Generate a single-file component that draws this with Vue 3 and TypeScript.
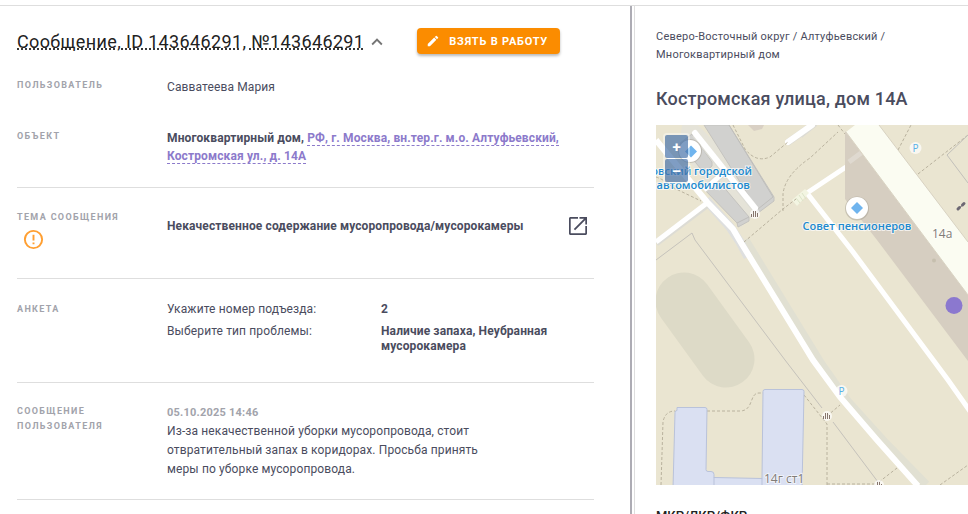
<script setup lang="ts">
import { ref } from 'vue'

interface Answer {
  question: string
  value: string
}

const answers: Answer[] = [
  { question: 'Укажите номер подъезда:', value: '2' },
  { question: 'Выберите тип проблемы:', value: 'Наличие запаха, Неубранная мусорокамера' },
]

const crumbs: string[] = ['Северо-Восточный округ', 'Алтуфьевский', 'Многоквартирный дом']

const gates: [number, number][] = [[755, 214], [827, 416], [879, 485]]

const expanded = ref(true)
const zoom = ref(1)

function changeZoom(step: number): void {
  zoom.value = Math.min(3, Math.max(1, zoom.value + step))
}
</script>

<template>
  <div class="page">
    <main class="message">
      <header class="message-head">
        <h1 class="title"><abbr class="title-text">Сообщение, ID 143646291, №143646291</abbr></h1>
        <button class="toggle" type="button" aria-label="Свернуть" :aria-expanded="expanded" @click="expanded = !expanded">
          <svg viewBox="0 0 24 24" width="22" height="22"><path d="M7.410 15.410L12 10.830l4.590 4.580L18 14l-6-6-6 6z" /></svg>
        </button>
        <button class="take" type="button">
          <svg viewBox="0 0 24 24" width="14" height="14"><path d="M3 17.250V21h3.750L17.810 9.940l-3.750-3.750L3 17.250zM20.710 7.040a1 1 0 0 0 0-1.410l-2.340-2.340a1 1 0 0 0-1.410 0l-1.830 1.830 3.750 3.750 1.830-1.830z" /></svg>
          <span>Взять в работу</span>
        </button>
      </header>

      <div v-if="expanded" class="details">
        <section class="row person">
          <h2 class="label">Пользователь</h2>
          <p>Савватеева Мария</p>
        </section>

        <section class="row ruled object">
          <h2 class="label">Объект</h2>
          <p class="strong">Многоквартирный дом, <a class="link" href="#object">РФ, г. Москва, вн.тер.г. м.о. Алтуфьевский, Костромская ул., д. 14А</a></p>
        </section>

        <section class="row ruled theme">
          <div>
            <h2 class="label">Тема сообщения</h2>
            <svg class="alert" viewBox="0 0 24 24" width="23" height="23"><path d="M11 15h2v2h-2v-2m0-8h2v6h-2V7m1-5C6.470 2 2 6.500 2 12a10 10 0 0 0 10 10 10 10 0 0 0 10-10A10 10 0 0 0 12 2m0 18a8 8 0 0 1-8-8 8 8 0 0 1 8-8 8 8 0 0 1 8 8 8 8 0 0 1-8 8z" /></svg>
          </div>
          <div class="theme-value">
            <p class="strong">Некачественное содержание мусоропровода/мусорокамеры</p>
            <a class="open" href="#theme" aria-label="Открыть тему">
              <svg viewBox="0 0 24 24" width="24" height="24"><path d="M19.300 19.300H4.700V4.700H12V3H4.500C3.670 3 3 3.670 3 4.500v15c0 .83.67 1.500 1.500 1.500h15c.83 0 1.500-.67 1.500-1.500V12h-1.700v7.300zM13.500 3v1.700h4.500L7.800 14.900l1.300 1.300L19.300 6v4.500H21V3h-7.500z" /></svg>
            </a>
          </div>
        </section>

        <section class="row ruled form">
          <h2 class="label">Анкета</h2>
          <dl class="answers">
            <div v-for="answer in answers" :key="answer.question" class="answer">
              <dt>{{ answer.question }}</dt>
              <dd>{{ answer.value }}</dd>
            </div>
          </dl>
        </section>

        <section class="row ruled">
          <h2 class="label">Сообщение пользователя</h2>
          <div>
            <time class="date" datetime="2025-10-05T14:46">05.10.2025 14:46</time>
            <p class="body">Из-за некачественной уборки мусоропровода, стоит отвратительный запах в коридорах. Просьба принять меры по уборке мусоропровода.</p>
          </div>
        </section>
      </div>
    </main>

    <aside class="side">
      <nav class="crumbs">
        <template v-for="(crumb, i) in crumbs" :key="crumb"><template v-if="i"> / </template><span>{{ crumb }}</span></template>
      </nav>
      <h2 class="address">Костромская улица, дом 14А</h2>

      <div class="map">
        <svg class="map-canvas" viewBox="656 125 312 360" preserveAspectRatio="xMinYMin slice">
          <rect x="656" y="125" width="312" height="360" fill="#eae5d1" />
          <path d="M748 125h16l-2 4-8 2z" fill="#d9d0c4" />
          <path d="M684 301l42 58" stroke="#dddac7" stroke-width="57" stroke-linecap="round" />

          <!-- garage blocks -->
          <path d="M682 125h16l74 76-31 26-62-79z" fill="#e5e3d8" />
          <g fill="#d1d1cf" stroke="#c4c3bf" stroke-width="1">
            <path d="M704 125h25l45 72v4l-16 12-1-4z" />
            <path d="M680 143l12-9 20 28v4l-8 7z" />
            <path d="M702 187l14-9 33 39v4l-11 6-1-4z" />
          </g>
          <path d="M729 125l44 72-15 12M749 217l-12 6" fill="none" stroke="#bfbebb" />

          <!-- roadside strip and roads -->
          <path d="M745 240l76 124 26 37 38 42 41 42" fill="none" stroke="#e1e0d2" stroke-width="9" />
          <path d="M706 200l24 27 10 15 8 15" fill="none" stroke="#dedfdf" stroke-width="9" />
          <path d="M656 243l52-39M695 134l61 76M704 189l18-15M787 143l27-19M800 135l15-12" fill="none" stroke="#dddcd5" stroke-width="7" />
          <g fill="none" stroke="#fff" stroke-width="6">
            <path d="M656 140l51 62 26 27 7 12 73 119 27 37 37 43 41 46" />
            <path d="M656 242l51-39M704 190l18-16" stroke-width="5" />
            <path d="M695 133l60 75" stroke-linecap="round" />
            <path d="M788 142l24-17" stroke-linecap="round" />
            <path d="M846 167l-39 26 46 59 95 128 24 34" stroke-width="5" />
          </g>
          <path d="M792 200l13-11 4 4-12 13z" fill="#f3f5e2" />
          <path d="M796 198l4 5m-1-8l4 6m-1-8l4 6" stroke="#dce4c8" fill="none" />

          <!-- footpaths -->
          <g fill="none" stroke="#b9b29e" stroke-width="1" stroke-dasharray="3 2">
            <path d="M733 125l12 24q11 14 25 8l18-15" />
            <path d="M744 242l39-33 13-10M783 211v-17q2-19 27-36l28-26" />
            <path d="M656 177q9 3 18 11l27 13" />
            <path d="M838 125l7 9M898 150l13-25M918 174l50-39" />
            <path d="M661 485l2-63q2-11 12-11M707 411h33c14 0 9-18 19-18h4" />
            <path d="M804 395l23 29v61M827 484h49M827 416l13-11M879 482l18-14M940 485l28-20" />
          </g>
          <g fill="none" stroke="#c5c2bb" stroke-width="1">
            <path d="M656 260l36-27 3 7 90 120 37 48M833 422l45 60" />
            <path d="M968 135l-21 20 21 28" stroke="#c1bfba" />
          </g>

          <!-- house 14а -->
          <path d="M845 131v68l32 41 91 121v-66z" fill="#d6cec1" />
          <path d="M846 132l9-7h24l89 117v53z" fill="#fbfcf2" />
          <path d="M846 132l122 163M879 125l89 117" fill="none" stroke="#d8d2c2" />
          <path d="M849 162l12-9" stroke="#dfd9d0" stroke-width="5" />
          <circle cx="934" cy="260.500" r="2" fill="#c6bfae" />

          <!-- house 14г ст1 -->
          <path d="M677 407.500h28q2 0 2 2l-1 60q0 2 2 2h3q3 0 3 3v3l48 1 1-87q0-2 2-2h37q2 0 2 2l-2 97H673l2-76q0-2 2-2z" fill="#dae0f2" stroke="#b9c2da" />
          <path d="M714 477v8M762 478v7" stroke="#b9c2da" />

          <!-- gates -->
          <g v-for="[x, y] in gates" :key="x" :transform="`translate(${x} ${y})`">
            <circle r="5" fill="#fff" opacity=".7" />
            <path d="M-3.500 3V0M-1.500 3v-6M.5 3v-6M2.500 3v-4" stroke="#86756d" stroke-width="1" />
          </g>
          <path d="M958 209l6-5" stroke="#6d6873" stroke-width="1" />
          <path d="M958 209l1.500-1.500M962.500 205l1.500-1.500" stroke="#6d6873" stroke-width="3" stroke-linecap="round" />

          <!-- parking -->
          <g class="parking">
            <circle cx="915.500" cy="148" r="6" />
            <text x="915.500" y="152">P</text>
            <circle cx="841.500" cy="391" r="6" />
            <text x="841.500" y="395">P</text>
          </g>

          <!-- places -->
          <g>
            <circle cx="690" cy="151" r="12" fill="#a59f93" opacity=".5" />
            <circle cx="690" cy="151" r="11" fill="#fff" />
            <path d="M691 145.500l6 6-6 6-6-6z" fill="#6fb4ee" />
            <circle cx="857" cy="208.500" r="12" fill="#a59f93" opacity=".5" />
            <circle cx="857" cy="208" r="11" fill="#fff" />
            <path d="M857 202l6 6-6 6-6-6z" fill="#6fb4ee" />
          </g>
          <g class="poi">
            <text x="752" y="175" text-anchor="end">Московский городской</text>
            <text x="750" y="189" text-anchor="end">союз автомобилистов</text>
            <text x="857" y="230" text-anchor="middle">Совет пенсионеров</text>
          </g>
          <text class="house" x="932" y="238">14а</text>
          <text class="house" x="764" y="483">14г ст1</text>

          <circle cx="954" cy="305.500" r="8.500" fill="#8b78cf" />
        </svg>
        <div class="zoom">
          <button type="button" aria-label="Приблизить" @click="changeZoom(1)">+</button>
          <button type="button" aria-label="Отдалить" @click="changeZoom(-1)">–</button>
        </div>
      </div>

      <h3 class="programs">МКР/ЛКР/ФКР</h3>
    </aside>
  </div>
</template>

<style>
body {
  background: #fff;
  overflow: hidden;
}
</style>

<style scoped>
.page {
  box-sizing: border-box;
  height: 100vh;
  padding-top: 5px;
  display: grid;
  grid-template-columns: minmax(0, 1fr) 334px;
  column-gap: 2px;
  background: linear-gradient(#dedede, #dedede) 0 5px / 100% 1px no-repeat;
  font-family: Roboto, "Liberation Sans", sans-serif;
  font-size: 12px;
  line-height: 18px;
  color: #4a4c5e;
}

h1, h2, h3, p, dl, dd {
  margin: 0;
}

h2, p, dl, time {
  letter-spacing: 0.01em;
}

.message,
.side {
  margin-top: 1px;
  overflow: hidden;
}

.message {
  padding: 22px 36px 0 17px;
  border-right: 2px solid #adacb4;
}

.message-head {
  display: flex;
  align-items: flex-start;
  margin-bottom: 22px;
}

.title {
  font-size: 18px;
  font-weight: 400;
  line-height: 28px;
  letter-spacing: 0.02em;
  color: #222;
  white-space: nowrap;
}

.title-text {
  text-decoration: underline dotted;
}

button {
  font-family: inherit;
  cursor: pointer;
}

.toggle {
  display: flex;
  align-items: center;
  height: 28px;
  margin: 0 29px 0 2px;
  padding: 0;
  border: 0;
  background: none;
}

.toggle svg {
  fill: #757575;
}

.take {
  display: flex;
  align-items: center;
  gap: 9px;
  height: 26px;
  padding: 0 12px 0 9px;
  border: 0;
  border-radius: 4px;
  background: #fb8c00;
  box-shadow: 0 2px 3px rgba(0, 0, 0, 0.28);
  color: #fff;
  font-size: 11px;
  font-weight: 700;
  letter-spacing: 0.07em;
  text-transform: uppercase;
  white-space: nowrap;
}

.take svg {
  fill: #fff;
}

.row {
  display: grid;
  grid-template-columns: 150px minmax(0, 1fr);
  padding: 21px 0 20px;
}

.row.person {
  padding: 0 0 13px;
}

.row.object {
  padding: 20px 0 22px;
}

.ruled {
  border-bottom: 1px solid #dedede;
}

.label {
  padding-right: 24px;
  font-size: 9px;
  font-weight: 700;
  line-height: 15px;
  letter-spacing: 0.15em;
  text-transform: uppercase;
  color: #a2a3ab;
}

.strong {
  font-weight: 700;
}

.link {
  color: #8c7acb;
  text-decoration: none;
  border-bottom: 1px dashed #8c7acb;
}

.row.theme {
  padding: 22px 0 27px;
}

.theme .label {
  padding-right: 0;
}

.alert {
  display: block;
  margin: 3px 0 0 5px;
  fill: #ff9f32;
}

.theme-value {
  display: flex;
  align-items: center;
  justify-content: space-between;
  height: 32px;
  padding-right: 4px;
}

.open {
  display: flex;
}

.open svg {
  fill: #4a4c5e;
}

.row.form {
  padding: 23px 0 28px;
}

.answers {
  display: grid;
  gap: 7px;
  line-height: 15px;
}

.answer {
  display: grid;
  grid-template-columns: 214px minmax(0, 1fr);
}

.answer dd {
  font-weight: 700;
}

.date {
  display: block;
  font-size: 11px;
  font-weight: 700;
  letter-spacing: 0.02em;
  color: #a2a3ab;
}

.body {
  max-width: 330px;
  line-height: 19px;
}

.side {
  border-left: 1px solid #dedede;
  padding: 22px 0 0 21px;
}

.crumbs {
  max-width: 260px;
  font-size: 11px;
  letter-spacing: 0.02em;
}

.address {
  margin: 22px 0 13px;
  font-size: 18px;
  font-weight: 500;
  line-height: 26px;
}

.map {
  position: relative;
  height: 360px;
  overflow: hidden;
}

.map-canvas {
  display: block;
  width: 100%;
  height: 100%;
}

.poi,
.house,
.parking {
  font-family: "Open Sans", "Noto Sans", sans-serif;
}

.poi {
  font-size: 11px;
  font-weight: 600;
  fill: #2089ce;
  paint-order: stroke;
  stroke: rgba(255, 255, 255, 0.7);
  stroke-width: 2px;
}

.house {
  font-size: 12px;
  fill: #817c78;
  paint-order: stroke;
  stroke: rgba(255, 255, 255, 0.6);
  stroke-width: 2px;
}

.parking circle {
  fill: #fff;
  opacity: 0.7;
}

.parking text {
  font-size: 10px;
  text-anchor: middle;
  fill: #58b1e8;
}

.zoom {
  position: absolute;
  top: 8px;
  left: 7px;
  padding: 2px;
  display: grid;
  gap: 1px;
  border-radius: 4px;
  background: rgba(255, 255, 255, 0.4);
}

.zoom button {
  width: 23px;
  height: 23px;
  padding: 0;
  border: 0;
  border-radius: 2px;
  background: rgba(0, 60, 136, 0.5);
  color: #fff;
  font-size: 15px;
  font-weight: 700;
  line-height: 22px;
}

.programs {
  margin-top: 21px;
  font-size: 13px;
  font-weight: 500;
  line-height: 20px;
  color: #222;
}
</style>
